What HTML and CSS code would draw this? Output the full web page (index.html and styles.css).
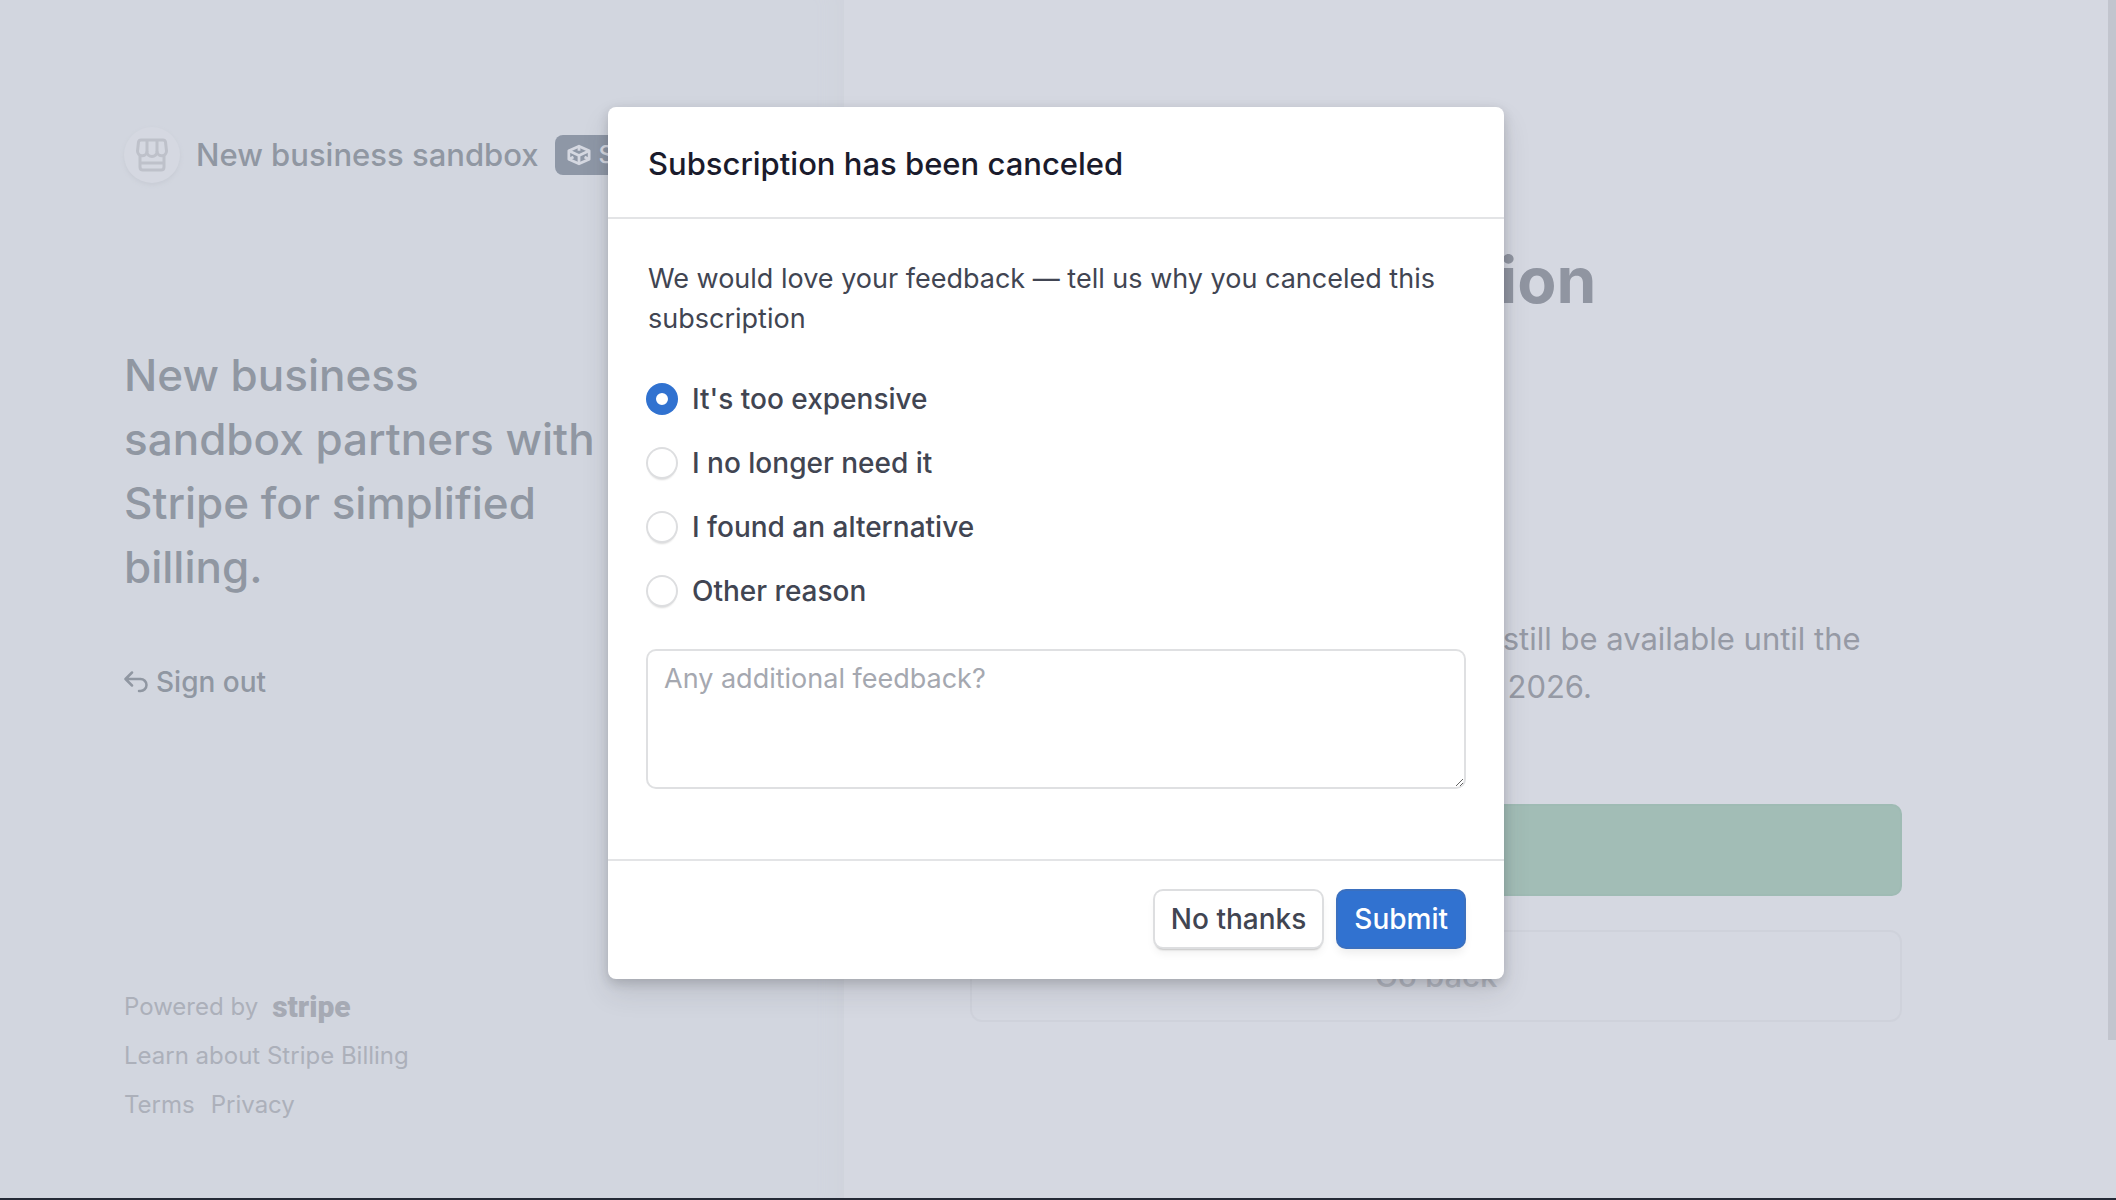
FILE: index.html
```html
<!DOCTYPE html>
<html lang="en">
<head>
    <meta charset="UTF-8">
    <meta name="viewport" content="width=device-width, initial-scale=1.0">
    <title>Cancel subscription</title>
    <link rel="stylesheet" href="styles.css">
</head>
<body>

    <div class="page">
        <aside class="sidebar">
            <div class="brand">
                <span class="brand-logo">
                    <svg width="32" height="34" viewBox="0 0 32 34" fill="none" stroke="currentColor" stroke-width="3" stroke-linejoin="round">
                        <path d="M5 2h22q2 0 2.500 2l1 9a4.800 4.800 0 0 1-9.500 1a5 4.500 0 0 1-10 0a4.800 4.800 0 0 1-9.500-1l1-9q.5-2 2.500-2z"/>
                        <path d="M11 2v12M21 2v12"/>
                        <path d="M4 18v11q0 3 3 3h18q3 0 3-3V18M4 25h24"/>
                    </svg>
                </span>
                <span class="brand-name">New business sandbox</span>
                <span class="badge">
                    <svg width="24" height="22" viewBox="0 0 26 22" fill="none" stroke="currentColor" stroke-width="3" stroke-linejoin="round">
                        <path d="M13 1.500L24 6.500v9L13 20.500L2 15.500v-9z"/>
                        <path d="M2 6.500l11 5l11-5M13 11.500v9M2 15.500l5-2.300M24 15.500l-5-2.300M13 1.500v5"/>
                    </svg>
                    Sandbox
                </span>
            </div>

            <h2 class="headline">New business sandbox partners with Stripe for simplified billing.</h2>

            <a href="#" class="sign-out">
                <svg width="24" height="22" viewBox="0 0 24 22" fill="none" stroke="currentColor" stroke-width="2.500" stroke-linecap="round" stroke-linejoin="round">
                    <path d="M8 1.500L1.500 8L8 14.500M2 8h14.500a6 6 0 0 1 0 12h-1.500"/>
                </svg>
                Sign out
            </a>

            <footer class="sidebar-footer">
                <a href="#" class="powered">Powered by <span class="stripe">stripe</span></a>
                <a href="#">Learn about Stripe Billing</a>
                <div class="legal">
                    <a href="#">Terms</a>
                    <a href="#">Privacy</a>
                </div>
            </footer>
        </aside>

        <main class="content">
            <h1>Cancel subscription</h1>
            <p class="notice">This plan will be canceled, yet it will still be available until the end of your billing period on June 5, 2026.</p>
            <button type="button" class="btn-confirm" aria-label="Canceled"></button>
            <button type="button" class="btn-back">Go back</button>
        </main>
        <div class="scroll-thumb"></div>
    </div>

    <div class="overlay">
        <form class="modal" role="dialog" aria-labelledby="modal-title">
            <header class="modal-header">
                <h3 id="modal-title">Subscription has been canceled</h3>
            </header>

            <div class="modal-body">
                <p>We would love your feedback — tell us why you canceled this subscription</p>

                <div class="reasons">
                    <label><input type="radio" name="reason" checked> It's too expensive</label>
                    <label><input type="radio" name="reason"> I no longer need it</label>
                    <label><input type="radio" name="reason"> I found an alternative</label>
                    <label><input type="radio" name="reason"> Other reason</label>
                </div>

                <textarea placeholder="Any additional feedback?" aria-label="Any additional feedback?"></textarea>
            </div>

            <footer class="modal-footer">
                <button type="button" class="btn">No thanks</button>
                <button type="submit" class="btn btn-primary">Submit</button>
            </footer>
        </form>
    </div>

</body>
</html>
```
FILE: styles.css
```css
* {
    box-sizing: border-box;
}

body {
    margin: 0;
    font-family: Inter, "Liberation Sans", sans-serif;
    font-size: 28px;
    line-height: 40px;
    background-color: #d5d8e1;
    color: #414552;
}

h1, h2, h3, p {
    margin: 0;
}

a {
    color: inherit;
    text-decoration: none;
}

button, textarea {
    font: inherit;
}

.page {
    display: grid;
    grid-template-columns: 2fr 3fr;
    min-height: 100vh;
    padding-right: 6px;
    border-bottom: 2px solid #252a36;
}

/* left side */
.sidebar {
    display: flex;
    flex-direction: column;
    align-items: flex-start;
    padding: 127px 0 77px 124px;
    background-color: #d2d6df;
    box-shadow: inset -28px 0 28px -28px #ced1da;
    color: #9097a2;
}

.brand {
    display: flex;
    align-items: center;
    gap: 16px;
    margin-bottom: 160px;
    font-size: 31px;
    font-weight: 500;
    white-space: nowrap;
}

.brand-logo {
    display: flex;
    align-items: center;
    justify-content: center;
    width: 56px;
    height: 56px;
    border-radius: 50%;
    background-color: #d5d8e1;
    box-shadow: 0 2px 4px #c8ccd5;
    color: #bec1ca;
}

.badge {
    display: flex;
    align-items: center;
    gap: 8px;
    height: 40px;
    padding: 0 12px;
    border-radius: 8px;
    background-color: #8e97a6;
    color: #d5d8e1;
    font-size: 24px;
}

.headline {
    max-width: 480px;
    margin-bottom: 63px;
    font-size: 44px;
    font-weight: 500;
    line-height: 64px;
}

.sign-out {
    display: flex;
    align-items: center;
    gap: 8px;
    font-weight: 500;
}

.sidebar-footer {
    display: flex;
    flex-direction: column;
    gap: 17px;
    margin-top: auto;
    font-size: 24px;
    line-height: 32px;
    color: #acb0ba;
}

.powered {
    display: flex;
    gap: 14px;
}

.stripe {
    font-family: Roboto, sans-serif;
    font-size: 30px;
    font-weight: 900;
    color: #a6aab4;
}

.legal {
    display: flex;
    gap: 16px;
}

/* right side */
.content {
    display: flex;
    flex-direction: column;
    max-width: 1058px;
    padding: 240px 0 0 126px;
}

h1 {
    margin-bottom: 295px;
    font-size: 64px;
    font-weight: 700;
    line-height: 80px;
    color: #9095a1;
}

.notice {
    margin-bottom: 93px;
    font-size: 31px;
    line-height: 48px;
    color: #969aa5;
}

.btn-confirm {
    height: 92px;
    margin-bottom: 34px;
    border: 2px solid #9fbbb4;
    border-radius: 10px;
    background-color: #a2bdb6;
}

.btn-back {
    height: 92px;
    border: 2px solid #cfd2db;
    border-radius: 12px;
    background: none;
    color: #b3b7c1;
    font-size: 31px;
    font-weight: 500;
}

.scroll-thumb {
    position: absolute;
    top: 0;
    right: 0;
    width: 8px;
    height: 1040px;
    background-color: #c2c5ce;
}

/* modal */
.overlay {
    position: absolute;
    top: 0;
    left: 0;
    right: 0;
    display: flex;
    justify-content: center;
    padding: 107px 4px 0 0;
}

.modal {
    width: 896px;
    border-radius: 8px;
    background-color: #fff;
    box-shadow: 0 14px 28px rgba(48, 49, 61, 0.12), 0 4px 12px rgba(0, 0, 0, 0.16);
}

.modal-header {
    padding: 37px 40px 33px;
    border-bottom: 2px solid #e3e4e6;
}

.modal-header h3 {
    font-size: 31px;
    font-weight: 500;
    color: #1a1b2c;
}

.modal-body {
    padding: 40px 40px 72px;
}

.modal-body p {
    font-size: 27px;
}

.reasons {
    display: flex;
    flex-direction: column;
    gap: 24px;
    margin: 40px 0;
    font-weight: 500;
}

.reasons label {
    display: flex;
    align-items: center;
    gap: 16px;
}

.reasons input {
    appearance: none;
    width: 28px;
    height: 28px;
    margin: 0;
    border-radius: 50%;
    background-color: #fff;
    box-shadow: 0 0 0 2px #dddee0, 0 3px 2px rgba(0, 0, 0, 0.14);
}

.reasons input:checked {
    border: 8px solid #3172d0;
    box-shadow: 0 0 0 2px #3172d0;
}

textarea {
    display: block;
    width: 100%;
    height: 136px;
    padding: 8px 16px;
    border: none;
    border-radius: 8px;
    box-shadow: 0 0 0 2px #dfe0e2;
    color: #414552;
    font-size: 27px;
}

textarea::placeholder {
    color: #a5a8b0;
}

.modal-footer {
    display: flex;
    justify-content: flex-end;
    gap: 16px;
    padding: 30px 40px 32px;
    border-top: 2px solid #e3e4e6;
}

.btn {
    height: 56px;
    padding: 0 16px;
    border: none;
    border-radius: 8px;
    background-color: #fff;
    box-shadow: 0 0 0 2px #dddee0, 0 3px 2px rgba(0, 0, 0, 0.2), 0 6px 10px rgba(0, 0, 0, 0.06);
    color: #414552;
    font-weight: 500;
}

.btn-primary {
    background-color: #3172d0;
    box-shadow: 0 0 0 2px #3b70bf, 0 6px 10px rgba(0, 0, 0, 0.08);
    color: #fff;
}
```
